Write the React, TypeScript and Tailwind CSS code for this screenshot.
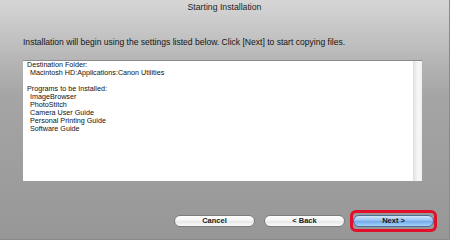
import React from "react";

const font = { fontFamily: '"Liberation Sans", Arial, sans-serif' };

function Btn({ label, primary }: { label: string; primary?: boolean }) {
  return (
    <div
      className={
        "flex h-[12px] w-[81px] items-center justify-center rounded-full border text-[7.5px] font-bold leading-none " +
        (primary
          ? "border-[#4b6d95] bg-[linear-gradient(#d4e6fb,#8fbcf0_50%,#6ea8ea_51%,#a9d2fb)] text-[#1a1a1a]"
          : "border-[#7d7d7d] bg-[linear-gradient(#ffffff,#f3f3f3_50%,#e6e6e6_51%,#fbfbfb)] text-[#1a1a1a]")
      }
    >
      {label}
    </div>
  );
}

export default function App() {
  return (
    <div
      style={font}
      className="flex h-[240px] w-[450px] flex-col overflow-hidden border-b border-r border-[#8a8a8a] bg-[linear-gradient(#d6d6d6,#b6b6b6_25%,#a5a5a5_40%,#979797)] text-[#111]"
    >
      <div className="flex h-[15px] items-center justify-center text-[8.7px] text-[#1e1e1e]">
        Starting Installation
      </div>
      <div className="mt-[22px] h-[10px] pl-[23px] text-[8.55px] leading-[10px] text-[#141414]">
        Installation will begin using the settings listed below. Click [Next] to start copying files.
      </div>
      <div className="ml-[23px] mt-[13px] flex h-[121px] w-[399px] border-t border-[#8c8c8c] bg-white">
        <div className="flex-1 pl-[4px] pt-[0px] text-[7.2px] leading-[8px] text-[#111]">
          <div>Destination Folder:</div>
          <div className="pl-[3px]">Macintosh HD:Applications:Canon Utilities</div>
          <div className="h-[8px]" />
          <div>Programs to be Installed:</div>
          <div className="pl-[3px]">ImageBrowser</div>
          <div className="pl-[3px]">PhotoStitch</div>
          <div className="pl-[3px]">Camera User Guide</div>
          <div className="pl-[3px]">Personal Printing Guide</div>
          <div className="pl-[3px]">Software Guide</div>
        </div>
        <div className="w-[9px] border-l border-[#e2e2e2] bg-[linear-gradient(90deg,#e4e4e4,#f8f8f8,#f0f0f0)]" />
      </div>
      <div className="mt-[29px] flex items-center justify-end pr-[12px]">
        <Btn label="Cancel" />
        <div className="ml-[9px]">
          <Btn label="< Back" />
        </div>
        <div className="ml-[5px] rounded-[6px] border-[3px] border-[#e0102a] py-[2px]">
          <Btn label="Next >" primary />
        </div>
      </div>
    </div>
  );
}
